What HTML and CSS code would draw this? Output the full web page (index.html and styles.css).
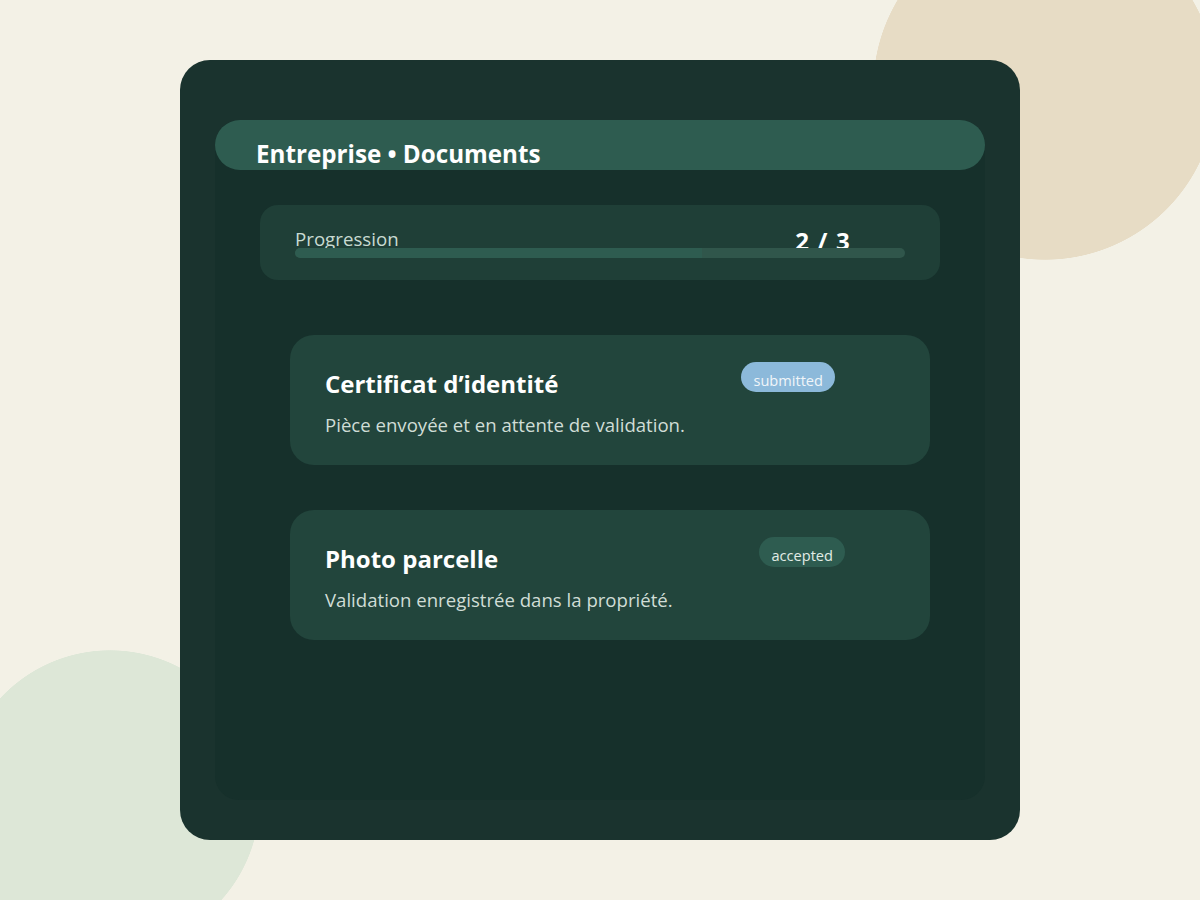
FILE: index.html
```html
<!DOCTYPE html>
<html lang="fr">
<head>
<meta charset="utf-8">
<title>Entreprise • Documents</title>
<link rel="stylesheet" href="styles.css">
</head>
<body>
<main class="shell">
  <section class="panel">
    <header class="panel-head">Entreprise • Documents</header>
    <div class="progress">
      <div class="progress-row">
        <span class="progress-label">Progression</span>
        <span class="progress-count">2 / 3</span>
      </div>
      <div class="bar"><div class="bar-fill" style="width: 66.67%"></div></div>
    </div>
    <div class="docs">
      <article class="doc">
        <div class="doc-head">
          <h2 class="doc-title">Certificat d’identité</h2>
          <span class="badge badge-submitted">submitted</span>
        </div>
        <p class="doc-desc">Pièce envoyée et en attente de validation.</p>
      </article>
      <article class="doc">
        <div class="doc-head">
          <h2 class="doc-title">Photo parcelle</h2>
          <span class="badge badge-accepted">accepted</span>
        </div>
        <p class="doc-desc">Validation enregistrée dans la propriété.</p>
      </article>
    </div>
  </section>
</main>
</body>
</html>
```

FILE: styles.css
```css
* { box-sizing: border-box; }

html, body {
  margin: 0;
  padding: 0;
}

body {
  width: 1200px;
  height: 900px;
  overflow: hidden;
  background-color: #f3f1e6;
  background-image:
    radial-gradient(circle 172px at 1045px 88px, #e7dcc5 171.4px, rgba(231, 220, 197, 0) 172px),
    radial-gradient(circle 150px at 110px 800px, #dde7d7 149.4px, rgba(221, 231, 215, 0) 150px);
  background-repeat: no-repeat;
  font-family: "Open Sans", "Noto Sans", sans-serif;
  color: #ffffff;
  padding-top: 60px;
}

.shell {
  width: 840px;
  height: 780px;
  margin: 0 0 0 180px;
  padding: 60px 35px 40px;
  background: #1a332e;
  border-radius: 30px;
  display: flex;
  flex-direction: column;
}

.panel {
  flex: 1;
  background: #16302b;
  border-radius: 25px 25px 24px 24px;
  display: flex;
  flex-direction: column;
}

.panel-head {
  height: 50px;
  padding: 18px 40px 0 41px;
  background: #2e5c50;
  border-radius: 25px;
  font-size: 24.2px;
  line-height: 32px;
  font-weight: 700;
  color: #ffffff;
  white-space: nowrap;
}

.progress {
  margin: 35px 45px 0;
  padding: 20px 35px 22px;
  background: #1f3f37;
  border-radius: 18px;
}

.progress-row {
  height: 23px;
  display: flex;
  align-items: flex-start;
  justify-content: space-between;
}

.progress-label {
  font-size: 18.7px;
  line-height: 28px;
  color: #c9dbd2;
}

.progress-count {
  font-size: 24px;
  line-height: 31px;
  font-weight: 700;
  letter-spacing: 1.2px;
  color: #ffffff;
  margin-right: 54px;
}

.bar {
  position: relative;
  height: 10px;
  border-radius: 5px;
  background: #30564b;
  overflow: hidden;
}

.bar-fill {
  height: 100%;
  background: #2e5c50;
  border-radius: 5px 0 0 5px;
}

.docs {
  margin: 55px 55px 0 75px;
  display: flex;
  flex-direction: column;
  gap: 45px;
}

.doc {
  height: 130px;
  padding: 27px 35px 0;
  background: #22453c;
  border-radius: 24px;
}

.doc-head {
  display: flex;
  align-items: flex-start;
  justify-content: space-between;
}

.doc-title {
  margin: 6px 0 0;
  font-size: 24px;
  line-height: 32px;
  font-weight: 700;
  color: #ffffff;
}

.badge {
  height: 30px;
  padding: 6px 12px 0;
  border-radius: 15px;
  font-size: 14.6px;
  line-height: 24px;
  white-space: nowrap;
}

.badge-submitted {
  background: #8cb9da;
  color: #f0f5f9;
  margin-right: 60px;
}

.badge-accepted {
  background: #2e5c50;
  color: #e2ece6;
  margin-right: 50px;
}

.doc-desc {
  margin: 11px 0 0;
  font-size: 18.6px;
  line-height: 27px;
  color: #d0ddd6;
}
```
